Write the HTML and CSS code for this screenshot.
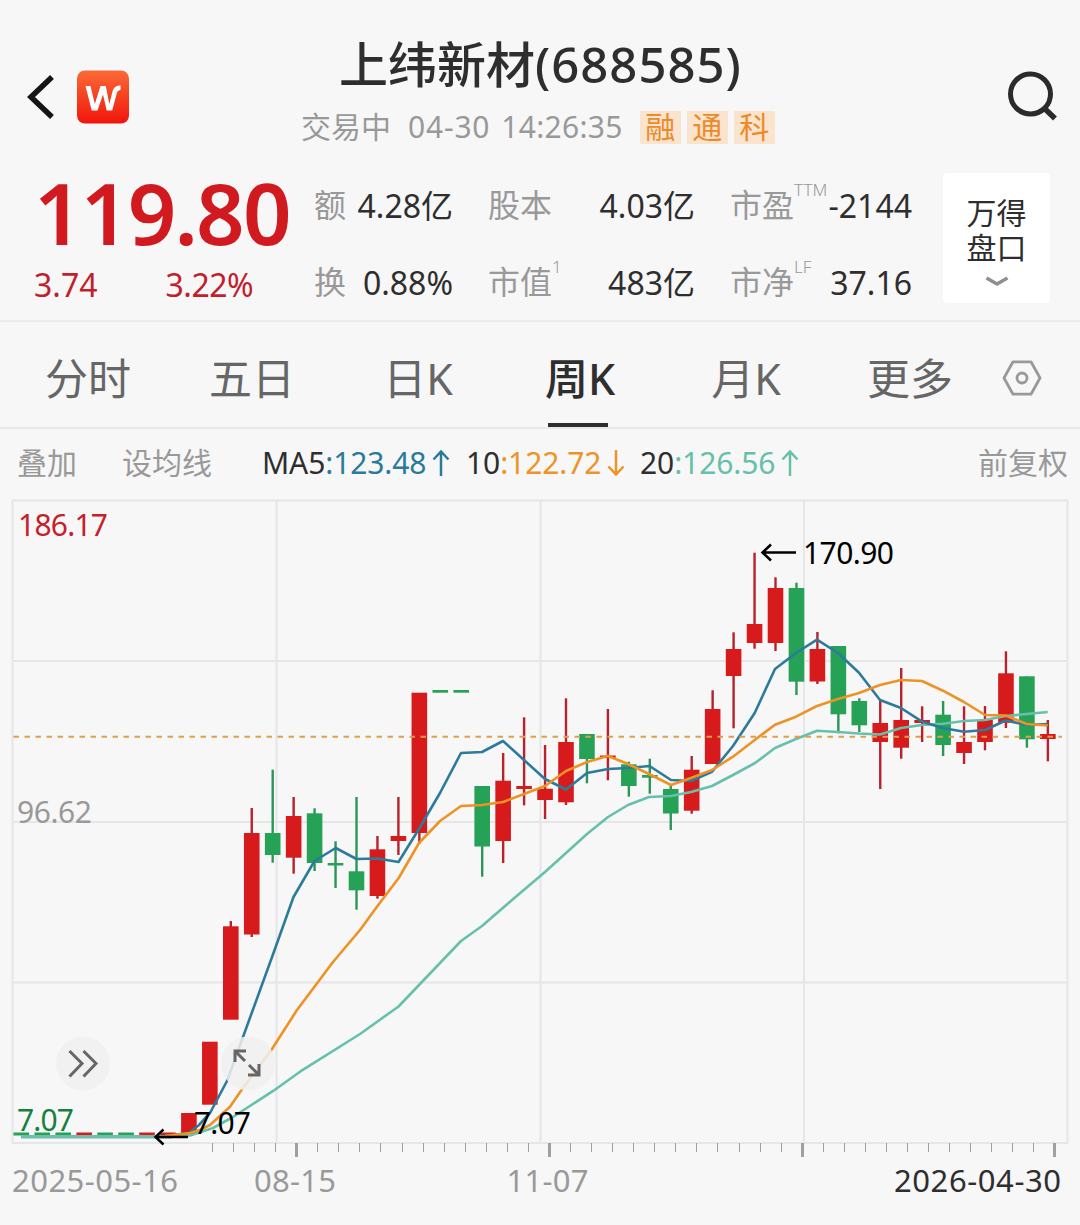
FILE: index.html
```html
<!DOCTYPE html>
<html lang="zh-CN">
<head>
<meta charset="utf-8">
<title>上纬新材(688585)</title>
<link rel="stylesheet" href="styles.css">
</head>
<body>
<header class="nav">
  <div class="nav-left">
    <svg class="back" width="28" height="46" viewBox="0 0 28 46"><path d="M26 3 L5 23 L26 43" fill="none" stroke="#151515" stroke-width="5.500"/></svg>
    <svg class="logo" width="52" height="54" viewBox="0 0 52 54">
      <defs><linearGradient id="brand" x1="0" y1="0" x2="0" y2="1"><stop offset="0" stop-color="#fb6a38"/><stop offset=".5" stop-color="#f5401f"/><stop offset="1" stop-color="#f2150c"/></linearGradient></defs>
      <rect width="52" height="53" y=".5" rx="8" fill="url(#brand)"/>
      <path d="M8.500 16 H13.500 L17.800 34 L23.500 16 H28.800 L32.300 34 L35.800 20.500 Q37.300 15.500 43.500 15.500 V20 Q40.800 19.800 40 22.500 L35.200 40.500 H29.700 L26 24.500 L20.500 40.500 H14.700 Z" fill="#fff"/>
    </svg>
  </div>
  <div class="nav-title">
    <h1 class="name">上纬新材<span class="code">(688585)</span></h1>
    <div class="status">
      <span class="phase">交易中</span><span class="date">04-30</span><span class="clock">14:26:35</span>
      <span class="tags"><b class="tag">融</b><b class="tag">通</b><b class="tag">科</b></span>
    </div>
  </div>
  <svg class="search" width="52" height="54" viewBox="0 0 52 54"><circle cx="24.500" cy="24" r="20" fill="none" stroke="#2b2b2b" stroke-width="5"/><path d="M37 37 L49 48.500" stroke="#2b2b2b" stroke-width="5.500"/></svg>
</header>

<section class="quote">
  <div class="last">
    <div class="price">119.80</div>
    <div class="change"><span>3.74</span><span class="pct">3.22%</span></div>
  </div>
  <dl class="stats">
    <div class="stat"><dt>额</dt><dd>4.28亿</dd></div>
    <div class="stat"><dt>股本</dt><dd>4.03亿</dd></div>
    <div class="stat"><dt>市盈<sup>TTM</sup></dt><dd>-2144</dd></div>
    <div class="stat"><dt>换</dt><dd>0.88%</dd></div>
    <div class="stat"><dt>市值<sup>1</sup></dt><dd>483亿</dd></div>
    <div class="stat"><dt>市净<sup>LF</sup></dt><dd>37.16</dd></div>
  </dl>
  <button class="depth"><span>万得</span><span>盘口</span>
    <svg width="24" height="11" viewBox="0 0 24 11"><path d="M1.500 2 L12 8 L22.500 2" fill="none" stroke="#8f8f8f" stroke-width="3.500"/></svg>
  </button>
</section>

<nav class="tabs">
  <span class="tab">分时</span>
  <span class="tab">五日</span>
  <span class="tab">日K</span>
  <span class="tab active">周K</span>
  <span class="tab">月K</span>
  <span class="tab">更多</span>
  <span class="tab settings"><svg width="40" height="36" viewBox="0 0 40 36"><path d="M11 1.800 H29 L38 18 L29 34.200 H11 L2 18 Z" fill="none" stroke="#999" stroke-width="2.800" stroke-linejoin="round"/><circle cx="20" cy="18" r="5" fill="none" stroke="#999" stroke-width="2.800"/></svg></span>
</nav>

<div class="averages">
  <span class="tool">叠加</span>
  <span class="tool">设均线</span>
  <span class="ma ma5"><i>MA5</i>:123.48<svg class="arrow" width="18" height="26" viewBox="0 0 18 26"><path d="M9 26 V2 M1.500 9.500 L9 1.500 L16.500 9.500"/></svg></span>
  <span class="ma ma10"><i>10</i>:122.72<svg class="arrow" width="18" height="26" viewBox="0 0 18 26"><path d="M9 0 V24 M1.500 16.500 L9 24.500 L16.500 16.500"/></svg></span>
  <span class="ma ma20"><i>20</i>:126.56<svg class="arrow" width="18" height="26" viewBox="0 0 18 26"><path d="M9 26 V2 M1.500 9.500 L9 1.500 L16.500 9.500"/></svg></span>
  <span class="tool adjust">前复权</span>
</div>

<svg class="chart" width="1080" height="729" viewBox="0 496 1080 729">
  <path class="grid" d="M12.500 500.500 H1067.500 V1143 H12.500 Z M12.500 661 H1067 M12.500 822 H1067 M12.500 982.500 H1067 M276.500 500 V1143 M540.500 500 V1143 M804 500 V1143"/>
  <g id="ticks"></g>
  <text class="axis price-label" x="17" y="822.500" textLength="75">96.62</text>
  <text class="axis price-label up" x="18" y="536" textLength="90">186.17</text>
  <g id="candles"></g>
  <path class="base" d="M21 1136.800 H172"/>
  <polyline class="line l20" points="165,1137 190,1135.500 213,1128 233,1117 273.500,1090.700 300,1071.700 360,1034 398.500,1006.500 461,941 482,926 512,900 545,872 566,853 587,834 608,817 628,805 649,797 671,796 691,792 712,786 733,775 755,763 775,748 796,739 817,730.700 838,732 859,733.500 880,734.500 901,728 922,725 943,723.700 964,721 985,720 1005.700,716 1026.700,714 1047.700,712"/>
  <polyline class="line l5" points="165,1136 189,1133 199,1125 210,1113 227,1081 243,1037 273.500,953 293.500,897 314.500,861 335.700,848 356.500,859 377.500,858.500 398.500,862 419.500,828 440,793 461,753 482,752 503,741 524,760 545,779 566,789.500 587,773 608,769 628,768 649.500,766 671,780 691,781 712,771.700 733,746 754.700,713 775,669 796,653 817,639.700 838,653 859,672.700 880,700 901,708 922,721.700 943,728 964,731.700 985,730 1005.700,720.500 1026.700,725 1047.700,724"/>
  <polyline class="line l10" points="165,1136 190,1133 200,1130 210,1125 230,1106.700 241,1090.700 272,1049 297,1010 333,962 360,930 377.500,906 398.700,878 419,843 440,821 461,806 482,805 503,802 524,794 545,786 566,771 587,762 608,756 628,764 649,774 671,785 691,778 712,770 733,756.700 754.700,740 775,724.700 796,716.700 817,706 838,699 859,693 880,685 901,680 922,681 943,690.700 964,702 985,715 1005.700,715.500 1026.700,724 1047.700,725.500"/>
  <path class="current" d="M13.500 736.700 H1062"/>
  <text class="axis price-label down" x="17" y="1130.500" textLength="57">7.07</text>
  <g class="mark">
    <path d="M762 552.500 H796 M771 544.500 L762.500 552.500 L771 560.500"/>
    <text class="price-label" x="803" y="563.500" textLength="91">170.90</text>
    <path d="M155 1137 H188 M163.500 1129.500 L155.500 1137 L163.500 1144.500"/>
    <text class="price-label" x="194" y="1133.500" textLength="57">7.07</text>
  </g>
  <g class="round">
    <circle cx="83" cy="1063.500" r="27"/>
    <path d="M69.500 1051 L82 1063.500 L69.500 1076.500 M83.500 1051 L96 1063.500 L83.500 1076.500"/>
    <circle cx="248" cy="1063.500" r="27"/>
    <path d="M235 1062 V1051 H246 M235.500 1051.500 L245 1061 M249 1065 L258.500 1074.500 M259 1064 V1075 H248"/>
  </g>
  <text class="axis" x="12" y="1191.500" textLength="166">2025-05-16</text>
  <text class="axis" x="254" y="1191.500" textLength="82">08-15</text>
  <text class="axis" x="506.500" y="1191.500" textLength="82">11-07</text>
  <text class="axis today" x="894" y="1191.500" textLength="167">2026-04-30</text>
</svg>
<script src="chart.js"></script>
</body>
</html>
```
FILE: styles.css
```css
* { box-sizing: border-box; }
body {
  margin: 0;
  width: 1080px;
  height: 1225px;
  overflow: hidden;
  background: #f7f7f8;
  color: #2e2e2e;
  font-family: "Noto Sans", "Noto Sans CJK SC", sans-serif;
}

.nav {
  height: 160px;
  padding: 0 22px 0 26px;
  display: grid;
  grid-template-columns: 254px 1fr 52px;
}
.nav-left { display: flex; align-items: center; gap: 23px; padding-top: 33px; height: 160px; }
.search { margin-top: 70px; }
.nav-title { padding: 34px 0 0 22px; white-space: nowrap; }
.name { margin: 0; padding-left: 37px; font-size: 49px; line-height: 60px; font-weight: 500; }
.code { letter-spacing: 1px; }
.status {
  display: flex;
  align-items: center;
  margin-top: 12px;
  font-size: 30px;
  line-height: 42px;
  color: #999;
}
.phase { margin-left: -1px; }
.date { margin-left: 17px; letter-spacing: .8px; }
.clock { margin-left: 11px; letter-spacing: .3px; }
.tags { display: flex; gap: 6px; margin-left: 17px; }
.tag {
  width: 41px;
  height: 33px;
  line-height: 32px;
  text-align: center;
  font-weight: 400;
  color: #ec8a2a;
  background: #fbe4cd;
}

.quote {
  height: 162px;
  display: grid;
  grid-template-columns: 314px 598px 107px;
  border-bottom: 2px solid #ececee;
}
.last { color: #d01a20; padding: 7px 0 0 34px; }
.price { font-size: 85px; line-height: 90px; height: 90px; font-weight: 560; letter-spacing: -1.800px; }
.change { display: flex; gap: 68px; font-size: 32px; line-height: 44px; margin: 6px 0 0 0; color: #c01f2b; }
.pct { letter-spacing: -.5px; }
.stats {
  margin: 7px 0 0;
  display: grid;
  grid-template-columns: 139px 207px 182px;
  grid-auto-rows: 77px;
  column-gap: 35px;
  font-size: 32px;
  line-height: 40px;
}
.stat { display: flex; justify-content: space-between; align-items: center; height: 77px; white-space: nowrap; }
.stat dt, .stat dd { height: 40px; margin: 0; }
.stat dt { color: #999; transform: translateY(-1px); }
.stat sup { display: inline-block; width: 0; font-size: 17px; font-weight: 350; line-height: 0; vertical-align: 21px; }
.depth {
  align-self: start;
  height: 130px;
  margin: 13px 0 0 31px;
  width: 107px;
  border: 0;
  padding: 0;
  border-radius: 4px;
  background: #fff;
  color: inherit;
  display: flex;
  flex-direction: column;
  align-items: center;
  font: 30px/35px "Noto Sans CJK SC", "Noto Sans", sans-serif;
}
.depth span:first-child { margin-top: 21px; }
.depth span { height: 35px; }
.depth svg { display: block; margin-top: 12px; }

.tabs {
  height: 107px;
  padding-left: 6px;
  display: grid;
  grid-template-columns: 164px 164px 168px 158px 172px 156px 68px;
  border-bottom: 2px solid #e8e8ea;
  font-size: 43px;
  line-height: 60px;
  color: #666;
}
.tab { display: flex; justify-content: center; align-items: center; padding-top: 8px; position: relative; }
.tab.settings { padding-top: 7px; }
.tab.active { color: #2e2e2e; font-weight: 500; padding-right: 2px; }
.tab.active::after {
  content: "";
  position: absolute;
  bottom: 0;
  left: 46px;
  width: 60px;
  height: 4px;
  background: #2e2e2e;
}

.averages {
  height: 67px;
  padding: 0 12px 0 17px;
  display: grid;
  grid-template-columns: 105px 140px 204px 174px 1fr auto;
  align-items: center;
  font-size: 30px;
  line-height: 40px;
  white-space: nowrap;
}
.tool { color: #999; }
.ma { display: flex; align-items: center; letter-spacing: -.1px; }
.ma i { font-style: normal; color: #2e2e2e; }
.ma5 { color: #2a7a9c; }
.ma10 { color: #ee9328; }
.ma20 { color: #68bfa9; }
.arrow { margin-left: 6px; fill: none; stroke: currentColor; stroke-width: 2.500; }

.chart { display: block; font-size: 31px; }
.price-label { font-size: 30px; }
.grid { fill: none; stroke: #e6e6e8; stroke-width: 2; }
.tick { fill: #a0a0a2; }
.axis { fill: #999; }
.axis.up { fill: #c5202c; }
.axis.down { fill: #168040; }
.axis.today { fill: #2e2e2e; }
.rise { fill: #d71a1c; }
.fall { fill: #26a257; }
.rise .wick { fill: #b9222d; }
.fall .wick { fill: #2b9658; }
.line { fill: none; stroke-width: 2.600; stroke-linejoin: round; }
.l5 { stroke: #2c7b9b; }
.l10 { stroke: #ee9226; }
.l20 { stroke: #66c0ab; }
.base { stroke: #6fbcab; stroke-width: 3.500; }
.current { stroke: #e0a04a; stroke-width: 2; stroke-dasharray: 5.500 5.500; }
.mark path { fill: none; stroke: #000; stroke-width: 2.500; }
.mark text { fill: #000; }
.round circle { fill: #f0f0f1; fill-opacity: .86; }
.round path { fill: none; stroke: #666; stroke-width: 3; }
```
FILE: chart.js
```js
const NS = "http://www.w3.org/2000/svg";

function rect(parent, x, y, w, h, cls) {
  const r = document.createElementNS(NS, "rect");
  r.setAttribute("x", x);
  r.setAttribute("y", y);
  r.setAttribute("width", w);
  r.setAttribute("height", h);
  if (cls) r.setAttribute("class", cls);
  parent.appendChild(r);
}

// One entry per week: direction, body top, body bottom, wick top, wick bottom
const weeks = [
  ["d", 1132.5, 1135.5], ["d", 1132.5, 1135.5], ["d", 1132.5, 1135.5], ["u", 1132.5, 1135.5],
  ["d", 1132.5, 1135.5], ["d", 1132.5, 1135.5], ["u", 1132.5, 1135.5], ["u", 1132.5, 1135.5],
  ["u", 1113, 1134], ["u", 1041.7, 1104.7], ["u", 926.3, 1019.7, 921, 1019], ["u", 833, 934.5, 808, 937],
  ["d", 833, 855, 769.7, 862.7], ["u", 816, 857.7, 797, 873.7], ["d", 813.3, 863, 808.3, 871],
  ["d", 863, 865.5, 841.3, 888], ["d", 871.3, 890.3, 797, 909.7], ["u", 849.3, 896, 836, 898.7],
  ["u", 836, 841, 797, 855], ["u", 692.7, 833, 693, 843.7], ["d", 690, 692.7], ["d", 690, 692.7],
  ["d", 786, 846.5, 786, 876.7], ["u", 780.7, 841, 753, 863], ["u", 786, 789, 717.3, 805.3],
  ["u", 788.7, 800, 745, 819], ["u", 742, 802.3, 698.3, 805], ["d", 734, 759, 734, 783.3],
  ["u", 755.5, 758, 709, 780.3], ["d", 764.3, 786, 761.7, 796.7], ["d", 775, 777.7, 758.7, 793.7],
  ["d", 789, 813.5, 785, 830], ["u", 769.7, 810.7, 756, 813.7], ["u", 709, 764, 690.3, 764],
  ["u", 649, 676, 632.3, 728.3], ["u", 624, 643, 552.7, 648.7], ["u", 588, 643, 577.3, 651],
  ["d", 588, 681.7, 582.7, 695], ["u", 649, 681.5, 632, 684], ["d", 646, 714.3, 646, 733.3],
  ["d", 701, 725.3, 698.3, 732], ["u", 723, 742, 700, 789], ["u", 720, 747.7, 668, 758.7],
  ["u", 720, 723, 706.3, 742], ["d", 714.7, 745, 701, 756], ["u", 742, 753, 706.3, 764],
  ["u", 720, 742, 706, 750.3], ["u", 673.3, 722.7, 651.3, 728], ["d", 676.3, 739.3, 676.3, 747.7],
  ["u", 734, 739, 720, 761.3]
];

const candles = document.getElementById("candles");
weeks.forEach(([dir, top, bottom, high, low], i) => {
  const g = document.createElementNS(NS, "g");
  g.setAttribute("class", dir === "u" ? "rise" : "fall");
  const cx = 21.3 + i * 20.95;
  if (high) rect(g, cx - 1.2, high, 2.4, low - high, "wick");
  rect(g, cx - 7.8, top, 15.6, bottom - top);
  candles.appendChild(g);
});

const ticks = document.getElementById("ticks");
const months = new Set([4, 16, 28, 40]);
for (let i = 0; i <= 40; i++) {
  const x = 212 + i * 21.06;
  if (months.has(i)) rect(ticks, Math.round(x) - 1, 1143, 3, 14, "tick");
  else rect(ticks, Math.round(x), 1143, 1, 9, "tick");
}
```
